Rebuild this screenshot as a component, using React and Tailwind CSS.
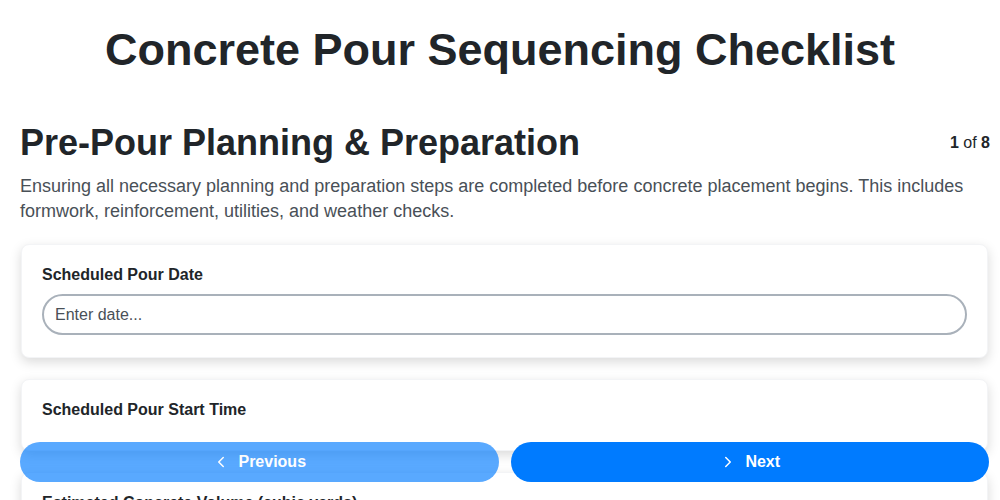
import React from "react";
import { ChevronLeft, ChevronRight } from "lucide-react";

const fields = [
  { label: "Scheduled Pour Date", placeholder: "Enter date..." },
  { label: "Scheduled Pour Start Time", placeholder: null },
  { label: "Estimated Concrete Volume (cubic yards)", placeholder: "Enter number..." },
  { label: "Concrete Mix Design ID", placeholder: "Enter text..." },
];

const FieldCard = ({ label, placeholder }) => (
  <div className="bg-white rounded-lg border border-gray-100 shadow-[0_4px_12px_rgba(0,0,0,0.15)] px-[20px] pt-[20px] pb-[22px]">
    <label className="block text-[16px] leading-[20px] font-bold text-[#212529]">{label}</label>
    {placeholder ? (
      <input
        type="text"
        placeholder={placeholder}
        className="mt-[9px] w-full h-[41px] rounded-full border-2 border-[#a9b1ba] px-[11px] text-[16px] text-[#212529] placeholder:text-[#495057] outline-none"
      />
    ) : (
      <div className="h-[8px]" />
    )}
  </div>
);

export default function App() {
  return (
    <div className="h-screen overflow-hidden bg-white font-['Liberation_Sans',Arial,sans-serif] text-[#212529]">
      <h1 className="text-center text-[45px] leading-[52px] font-bold pt-[24px]">
        Concrete Pour Sequencing Checklist
      </h1>

      <div className="pl-5 pr-[10px]">
        <div className="mt-[45px] flex items-center justify-between">
          <h2 className="text-[36px] leading-[43px] font-bold">Pre-Pour Planning &amp; Preparation</h2>
          <div className="text-[16px]">
            <span className="font-bold">1</span> of <span className="font-bold">8</span>
          </div>
        </div>

        <p className="mt-[10px] text-[18px] leading-[25px] text-[#495057]">
          Ensuring all necessary planning and preparation steps are completed before concrete placement begins. This includes formwork, reinforcement, utilities, and weather checks.
        </p>

        <div className="mt-[20px] mr-[2px] ml-[1px] flex flex-col gap-[21px] pb-24">
          {fields.map((f) => (
            <FieldCard key={f.label} {...f} />
          ))}
        </div>
      </div>

      <div className="fixed left-5 right-[11px] bottom-[18px] flex gap-3">
        <button className="flex-1 h-[40px] rounded-full bg-[#007bff] opacity-65 text-white text-[16px] font-bold flex items-center justify-center gap-2">
          <ChevronLeft size={18} strokeWidth={2} />
          Previous
        </button>
        <button className="flex-1 h-[40px] rounded-full bg-[#007bff] text-white text-[16px] font-bold flex items-center justify-center gap-2">
          <ChevronRight size={18} strokeWidth={2} />
          Next
        </button>
      </div>
    </div>
  );
}
